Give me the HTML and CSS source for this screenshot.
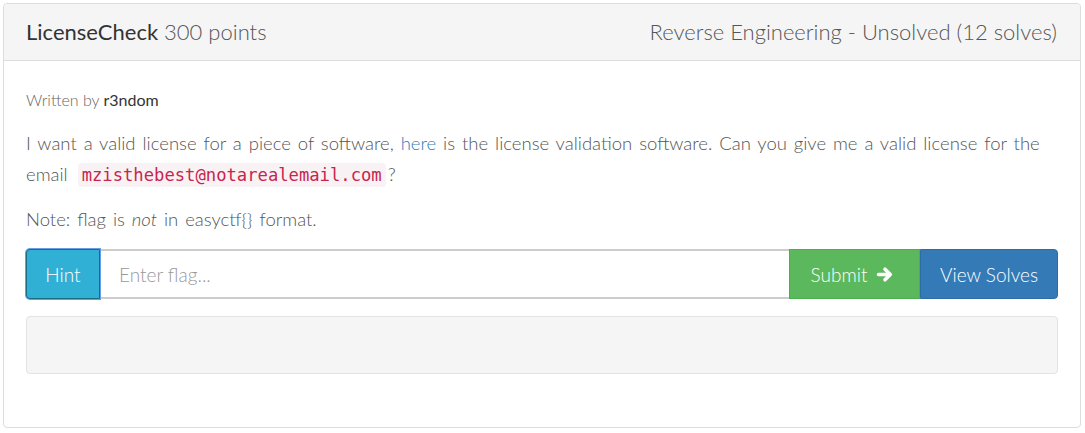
FILE: index.html
```html
<!DOCTYPE html>
<html lang="en">
<head>
<meta charset="utf-8">
<title>LicenseCheck</title>
<link rel="stylesheet" href="styles.css">
</head>
<body>
<div class="panel">
  <div class="panel-heading">
    <div class="title"><span class="name">LicenseCheck</span> <span class="pts">300 points</span></div>
    <div class="meta">Reverse Engineering - Unsolved (12 solves)</div>
  </div>
  <div class="panel-body">
    <p class="author">Written by <span class="who">r3ndom</span></p>
    <p class="desc">I want a valid license for a piece of software, <a href="#">here</a> is the license validation software. Can you give me a valid license for the email <code>mzisthebest@notarealemail.com</code>?</p>
    <p class="note">Note: flag is <em>not</em> in easyctf{} format.</p>
    <div class="input-group">
      <button class="btn btn-hint" type="button">Hint</button>
      <input class="flag" type="text" placeholder="Enter flag...">
      <button class="btn btn-submit" type="button">Submit <svg class="arrow" viewBox="0 0 18 17" width="18" height="17"><path d="M2.5 8.5H14M9 3.2L14.3 8.5L9 13.8" fill="none" stroke="#fff" stroke-width="3.6" stroke-linecap="round" stroke-linejoin="round"/></svg></button>
      <button class="btn btn-solves" type="button">View Solves</button>
    </div>
    <div class="well"></div>
  </div>
</div>
</body>
</html>
```
FILE: styles.css
```css
* { box-sizing: border-box; }
html, body { margin: 0; padding: 0; background: #fff; }
body {
  font-family: Lato, "Open Sans", "Liberation Sans", sans-serif;
  font-weight: 300;
  color: #555;
}
.panel {
  margin: 3px 4px 0 3px;
  border: 1px solid #ddd;
  border-radius: 4px;
  height: 425px;
  display: flex;
  flex-direction: column;
}
.panel-heading {
  height: 57px;
  background: #f5f5f5;
  border-bottom: 1px solid #ddd;
  border-radius: 3px 3px 0 0;
  padding: 0 23px 2px 22px;
  display: flex;
  align-items: center;
  justify-content: space-between;
  font-size: 22px;
}
.name { color: #333; font-weight: 400; }
.pts { color: #555; font-weight: 300; }
.meta { color: #555; font-weight: 300; }
.panel-body {
  padding: 28px 22px 0 22px;
}
p { margin: 0; }
.author {
  font-size: 16px;
  line-height: 22px;
  color: #666;
  margin-bottom: 17px;
}
.who { color: #333; font-weight: 400; }
.desc, .note {
  font-size: 18.5px;
  line-height: 31px;
  word-spacing: 1.9px;
}
.desc { margin-bottom: 13px; }
.note { margin-bottom: 14px; }
a { color: #337ab7; text-decoration: none; }
code {
  font-family: "DejaVu Sans Mono", "Liberation Mono", monospace;
  font-size: 17.2px;
  word-spacing: 0;
  color: #c7254e;
  background: #f9f2f4;
  border-radius: 4px;
  padding: 2px 4px;
  margin: 0 2px 0 3px;
}
em { font-style: italic; }
.input-group {
  display: flex;
  height: 50px;
}
.btn {
  font-family: inherit;
  font-weight: 300;
  font-size: 19px;
  color: #fff;
  border: 1px solid transparent;
  height: 50px;
  margin: 0;
  padding: 0;
  display: flex;
  align-items: center;
  justify-content: center;
  cursor: pointer;
}
.btn-hint {
  width: 74px;
  background: #31b0d5;
  border-color: #1b6d85;
  border-radius: 4px 0 0 4px;
  box-shadow: 0 0 0 1px #6a9ce6;
  position: relative;
  z-index: 1;
}
.flag {
  flex: 1;
  min-width: 0;
  height: 50px;
  border: 2px solid #ccc;
  border-left: 0;
  border-right: 0;
  padding: 0 19px;
  font-family: inherit;
  font-weight: 300;
  font-size: 19px;
  color: #555;
  outline: none;
}
.flag::placeholder { color: #999; }
.btn-submit {
  width: 131px;
  background: #5cb85c;
  border-color: #4cae4c;
  gap: 9px;
  padding-right: 4px;
}
.arrow { display: block; }
.btn-solves {
  width: 138px;
  background: #337ab7;
  border-color: #2e6da4;
  border-radius: 0 4px 4px 0;
}
.well {
  margin-top: 17px;
  height: 58px;
  background: #f5f5f5;
  border: 1px solid #e3e3e3;
  border-radius: 4px;
}
```
